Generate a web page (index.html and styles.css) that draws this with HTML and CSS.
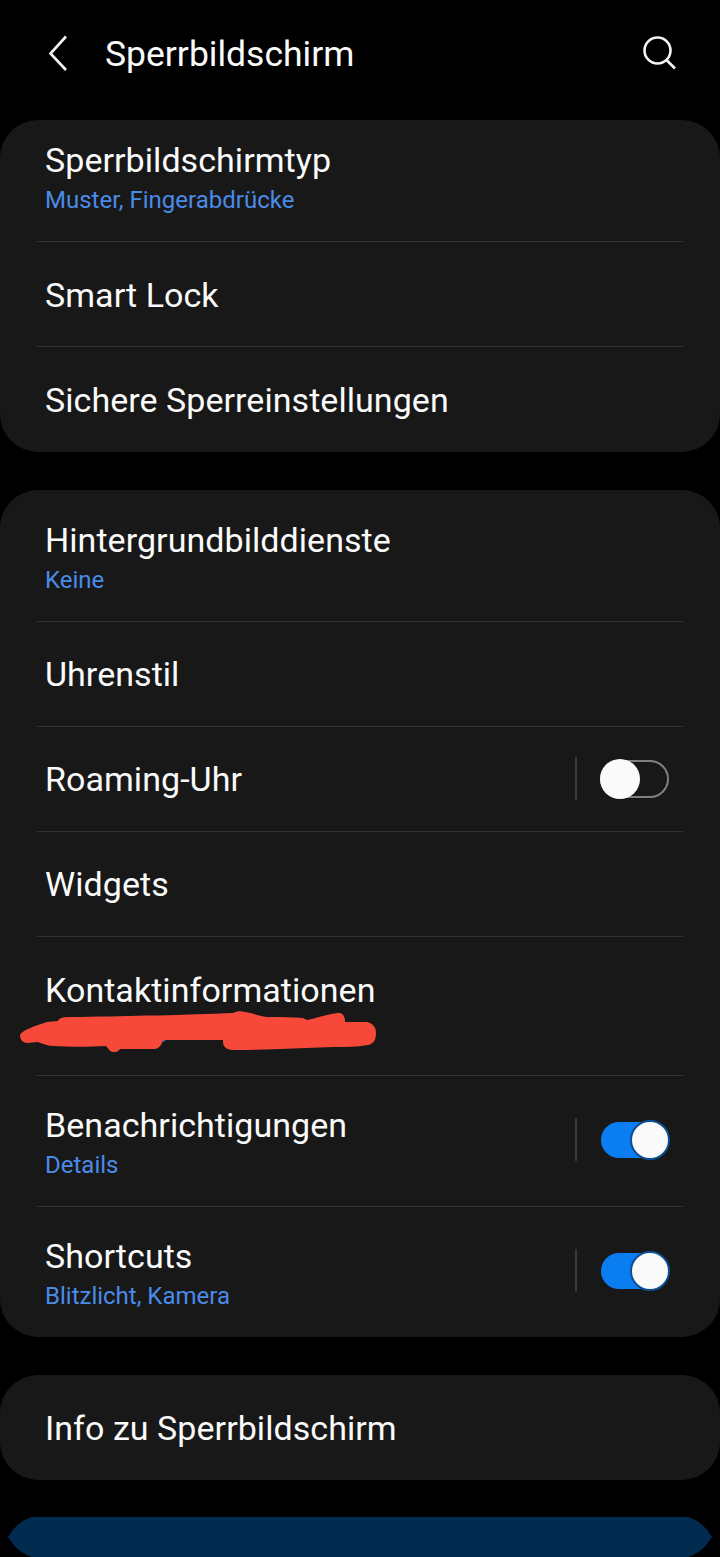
FILE: index.html
```html
<!DOCTYPE html>
<html lang="de">
<head>
<meta charset="utf-8">
<title>Sperrbildschirm</title>
<link rel="stylesheet" href="styles.css">
</head>
<body>
<div class="screen">
  <header class="topbar">
    <svg class="back" width="24" height="38" viewBox="0 0 24 38"><path d="M19 2.500 L3.500 19.500 L19 36"/></svg>
    <h1 class="heading">Sperrbildschirm</h1>
    <svg class="search" width="36" height="36" viewBox="0 0 36 36"><circle cx="16.500" cy="15.500" r="13"/><path d="M25.500 25 L34 33.500"/></svg>
  </header>

  <section class="card card-first">
    <div class="row row-sub"><div class="text"><div class="title">Sperrbildschirmtyp</div><div class="sub">Muster, Fingerabdrücke</div></div></div>
    <div class="row"><div class="text"><div class="title">Smart Lock</div></div></div>
    <div class="row"><div class="text"><div class="title">Sichere Sperreinstellungen</div></div></div>
  </section>

  <section class="card card-second">
    <div class="row row-tall"><div class="text"><div class="title">Hintergrundbilddienste</div><div class="sub">Keine</div></div></div>
    <div class="row"><div class="text text-up"><div class="title">Uhrenstil</div></div></div>
    <div class="row"><div class="text text-up"><div class="title">Roaming-Uhr</div></div><span class="divider"></span><span class="toggle"></span></div>
    <div class="row"><div class="text text-up"><div class="title">Widgets</div></div></div>
    <div class="row row-contact">
      <div class="text text-contact"><div class="title">Kontaktinformationen</div></div>
      <svg class="scribble" width="360" height="44" viewBox="0 0 360 44"><path class="speck" d="M142 30 C144 32 146 31 147 28"/><path class="ink" d="M1 25 C3 20 16 16 28 12 L39 11 C40 6 50 7 62 7 C110 6 170 5 214 3 C218 1 222 1 226 2 C234 3 240 6 248 7 C262 7 274 7 284 8 L288 10 C298 8 312 3 321 3 C325 4 326 8 326 12 L348 12 C355 14 357 18 357 23 C357 29 355 34 349 35 C338 37 326 37 314 37 C280 38 245 40 214 40 C207 40 204 36 204 32 L204 30 L144 30 C143 34 141 38 136 39 L101 39 C99 42 97 42 94 42 C91 42 89 38 87 36 C70 37 50 37 34 36 C30 36 24 34 19 32 C15 32 12 33 9 33 C4 33 1 30 1 25 Z"/></svg>
    </div>
    <div class="row row-tall"><div class="text"><div class="title">Benachrichtigungen</div><div class="sub">Details</div></div><span class="divider"></span><span class="toggle toggle-on"></span></div>
    <div class="row row-tall"><div class="text"><div class="title">Shortcuts</div><div class="sub">Blitzlicht, Kamera</div></div><span class="divider"></span><span class="toggle toggle-on"></span></div>
  </section>

  <section class="card card-third">
    <div class="row"><div class="text text-up"><div class="title">Info zu Sperrbildschirm</div></div></div>
  </section>

  <div class="cta"></div>
</div>
</body>
</html>
```
FILE: styles.css
```css
* { box-sizing: border-box; }
html, body { margin: 0; padding: 0; background: #000; }
.screen {
  width: 720px;
  height: 1557px;
  overflow: hidden;
  background: #000;
  color: #fafafa;
  font-family: Roboto, "Noto Sans", sans-serif;
}
.topbar {
  height: 120px;
  display: flex;
  align-items: center;
  padding: 0 43px 14px 47px;
}
.back, .search { flex: none; fill: none; stroke: #f4f4f4; stroke-width: 2.6; }
.heading {
  flex: 1;
  margin: 2px 0 0 34px;
  font-size: 35.5px;
  font-weight: 400;
  line-height: 44px;
}
.card {
  background: #181818;
  border-radius: 38px;
}
.card-first { height: 332px; margin-bottom: 38px; }
.card-second { height: 847px; margin-bottom: 38px; }
.card-third { height: 105px; margin-bottom: 37px; }
.row {
  position: relative;
  display: flex;
  align-items: center;
  height: 105px;
  padding: 0 51px 0 45px;
}
.row + .row::before {
  content: "";
  position: absolute;
  top: 0;
  left: 37px;
  right: 37px;
  height: 1px;
  background: #333;
}
.text { flex: 1; min-width: 0; padding-top: 3px; }
.text-up { padding-top: 1px; }
.row-sub { height: 121px; }
.row-sub > .text { padding: 0 0 8px; }
.row-tall { height: 131px; }
.row-tall > .text { padding-top: 3px; }
.row-tall .divider, .row-tall .toggle { margin-bottom: 2px; }
.row-contact { height: 139px; align-items: flex-start; padding-top: 29px; }
.title { font-size: 34px; line-height: 44px; letter-spacing: 0.05px; }
.sub { font-size: 24px; line-height: 32px; margin-top: 2px; color: #4a8be8; }
.divider {
  flex: none;
  width: 2px;
  height: 43px;
  margin-right: 23px;
  background: #3a3a3a;
}
.toggle {
  position: relative;
  flex: none;
  width: 69px;
  height: 38px;
  border: 2px solid #808080;
  border-radius: 19px;
}
.toggle::after {
  content: "";
  position: absolute;
  top: -3px;
  left: -2px;
  width: 40px;
  height: 40px;
  border-radius: 50%;
  background: #fafafa;
}
.toggle-on {
  width: 68px;
  height: 36px;
  margin-left: 1px;
  background: #0a7df0;
  border: 0;
  border-radius: 18px;
}
.toggle-on::after {
  left: auto;
  right: -1px;
  top: -2px;
  box-sizing: content-box;
  width: 36px;
  height: 36px;
  border: 2px solid #0a4f96;
}
.scribble { position: absolute; left: 19px; top: 74px; }
.ink { fill: #f6493a; }
.speck { fill: none; stroke: #4a6fd0; stroke-width: 1.5; }
.cta {
  height: 40px;
  margin: 0 8px;
  background: #022b50;
  clip-path: path("M0 20 C6 10 14 3 24 0 L680 0 C690 3 698 10 704 20 C698 30 690 37 680 40 L24 40 C14 37 6 30 0 20 Z");
}
```
